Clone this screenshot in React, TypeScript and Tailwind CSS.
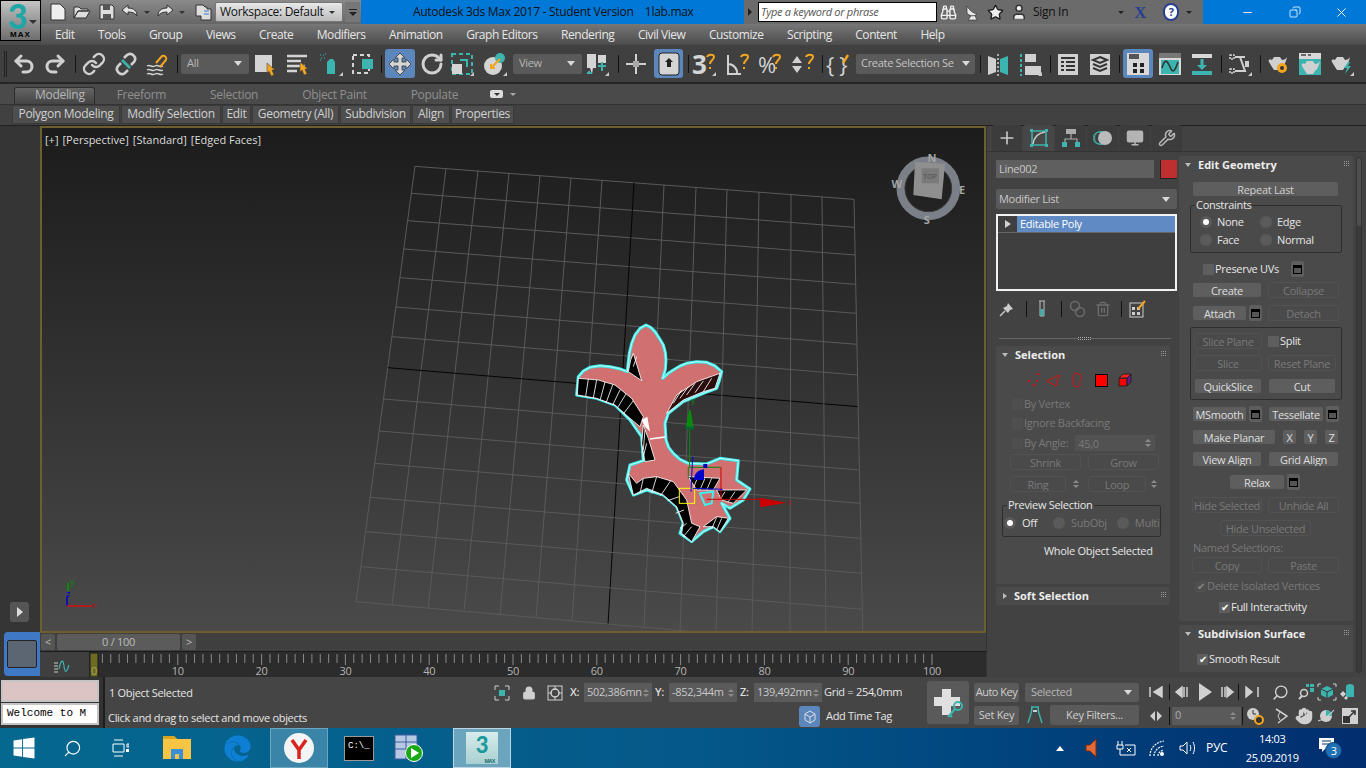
import React from "react";
import {
  Undo2, Redo2, Link, RotateCw, Binoculars, Star, User, Search, Lock, Hand, Wrench, Plus, Monitor, Trash2,
  Minus, X, Copy,
} from "lucide-react";
import { FaWindows, FaEdge } from "react-icons/fa";

const TEAL = "#3cb5b0";
const ORANGE = "#f2a51f";
const LIGHT = "#d0d0d0";

function I({ w = 24, h = 24, className = "", children }: { w?: number; h?: number; className?: string; children?: React.ReactNode }) {
  return (
    <svg width={w} height={h} viewBox={`0 0 ${w} ${h}`} fill="none" className={"shrink-0 " + className}>
      {children}
    </svg>
  );
}

const Flyout = () => <path d="M24 24h-4l4-4z" fill="#c8c8c8" />;
const Cursor = ({ x, y }: { x: number; y: number }) => (
  <path transform={`translate(${x} ${y})`} d="M0 0l8 7h-3l2 5-3 1-2-5-2 2z" fill={ORANGE} stroke="#3a3a3a" strokeWidth=".5" />
);

function Sep({ className = "" }: { className?: string }) {
  return <div className={"w-px h-[18px] bg-[#141414] shrink-0 " + className} />;
}

function Drop({ label, className = "" }: { label: string; className?: string }) {
  return (
    <div className={"h-[20px] bg-[#5a5a5a] rounded-[2px] shrink-0 flex items-center justify-between pl-[6px] pr-[7px] text-[11px] text-[#b8b8b8] overflow-hidden " + className}>
      <span className="whitespace-nowrap">{label}</span>
      <span className="w-0 h-0 border-x-[4px] border-x-transparent border-t-[5px] border-t-[#d8d8d8] shrink-0" />
    </div>
  );
}

function BigMenu() {
  const items = ["Edit", "Tools", "Group", "Views", "Create", "Modifiers", "Animation", "Graph Editors", "Rendering", "Civil View", "Customize", "Scripting", "Content", "Help"];
  return (
    <div className="h-[21px] bg-linear-to-b from-[#777777] to-[#4c4c4c] flex items-center gap-[23.5px] pl-[14px] text-[12px] tracking-[-0.45px] text-[#e6e6e6]">
      {items.map((m) => (
        <span key={m} className="whitespace-nowrap">{m}</span>
      ))}
    </div>
  );
}

function TitleRow() {
  return (
    <div className="h-[24px] flex bg-[#0078d7]">
      <div className="w-[320px] bg-linear-to-b from-[#8a8a8a] to-[#666666] flex items-center pl-[8px] shrink-0">
        <I w={18} h={18}><path d="M2 1h9l5 5v11H2z" fill="#eee" stroke="#333" /></I>
        <I w={18} h={18} className="ml-[6px]"><path d="M1 15V4h5l2 2h7v2H5l-4 7zM1 15l4-7h12l-4 7z" fill="#ddd" stroke="#333" /></I>
        <I w={18} h={18} className="ml-[7px]"><path d="M2 2h12l2 2v12H2z" fill="#ddd" stroke="#333" /><path d="M5 2h7v5H5zM5 11h8v5H5z" fill="#555" /></I>
        <I w={20} h={18} className="ml-[4px]"><path d="M2 7l6-5v3c6 0 9 3 9 8-2-3-5-4-9-4v3z" fill="#e4e4e4" stroke="#333" /></I>
        <span className="ml-[4px] mr-[5px] w-0 h-0 border-x-[3px] border-x-transparent border-t-[3px] border-t-[#333]" />
        <I w={20} h={18}><path d="M18 7l-6-5v3c-6 0-9 3-9 8 2-3 5-4 9-4v3z" fill="#e4e4e4" stroke="#333" /></I>
        <span className="ml-[4px] mr-[10px] w-0 h-0 border-x-[3px] border-x-transparent border-t-[3px] border-t-[#333]" />
        <I w={18} h={18}><path d="M1 2h7l2 2h2v2h4v11H6V13H1z" fill="#ddd" stroke="#333" /><path d="M9 8h5M9 11h5" stroke="#3b7ecb" /></I>
        <div className="ml-[2px] w-[128px] h-[20px] bg-linear-to-b from-[#e8e8e8] to-[#bcbcbc] flex items-center justify-between pl-[4px] pr-[7px] text-[12px] text-[#111] border border-[#777] rounded-[2px]">
          <span className="whitespace-nowrap">Workspace: Default</span>
          <span className="w-0 h-0 border-x-[3px] border-x-transparent border-t-[3px] border-t-[#333]" />
        </div>
        <div className="ml-[2px] w-[15px] h-[20px] bg-[#777] flex flex-col items-center justify-center gap-[2px]">
          <span className="w-[8px] h-px bg-[#222]" />
          <span className="w-0 h-0 border-x-[4px] border-x-transparent border-t-[4px] border-t-[#222]" />
        </div>
      </div>
      <div className="w-[383px] text-[12px] text-[#111] leading-[24px] pl-[52px] whitespace-pre shrink-0">{"Autodesk 3ds Max 2017 - Student Version    1lab.max"}</div>
      <div className="w-[459px] h-[24px] bg-[#6b6b6b] flex items-center shrink-0 pl-[4px]">
        <span className="w-0 h-0 border-y-[4px] border-y-transparent border-l-[4px] border-l-[#222]" />
        <div className="ml-[6px] w-[179px] h-[20px] bg-white border border-black text-[11px] italic text-[#555] pl-[2px] leading-[18px]">Type a keyword or phrase</div>
        <Binoculars size={17} color="#eee" className="ml-[3px]" />
        <I w={16} h={18} className="ml-[7px]"><path d="M3 3c3 5 6 7 10 8-3 3-8 2-10-1zM7 13l-3 4h9l-2-4" fill="#e8e8e8" stroke="#222" strokeWidth=".6" /></I>
        <Star size={17} fill="#eee" color="#222" className="ml-[7px]" />
        <User size={18} fill="#eee" color="#333" className="ml-[6px]" />
        <span className="ml-[5px] text-[12px] text-[#111]">Sign In</span>
        <span className="ml-[50px] w-0 h-0 border-x-[3px] border-x-transparent border-t-[3px] border-t-[#222]" />
        <span className="ml-[10px] text-[17px] leading-none font-bold text-[#26408f] font-['Liberation_Serif',serif]">X</span>
        <div className="ml-[17px] w-[16px] h-[18px] rounded-full bg-white border-2 border-[#26408f] text-[#26408f] text-[11px] font-bold leading-[14px] text-center">?</div>
        <span className="ml-[7px] w-0 h-0 border-x-[3px] border-x-transparent border-t-[3px] border-t-[#222]" />
      </div>
      <div className="flex-1 flex items-center text-white">
        <Minus size={13} className="ml-[38px]" strokeWidth={1.6} />
        <Copy size={12} className="ml-[35px] -scale-x-100" strokeWidth={1.6} />
        <X size={15} className="ml-[33px]" strokeWidth={1.5} />
      </div>
    </div>
  );
}

function Logo() {
  return (
    <div className="w-[41px] h-[41px] bg-linear-to-b from-[#c4c4c4] to-[#6f6f6f] border border-black flex flex-col items-center relative">
      <span className="text-[34px] leading-[30px] font-black text-[#1ea7a6] font-['Lato',sans-serif] -ml-[6px]">3</span>
      <span className="text-[8px] leading-[8px] font-bold text-black tracking-[1px] font-['Liberation_Sans',sans-serif]">MAX</span>
      <span className="absolute right-[3px] top-[19px] w-0 h-0 border-x-[4px] border-x-transparent border-t-[4px] border-t-[#333]" />
    </div>
  );
}

function MoveIcon() {
  return (
    <I>
      <path d="M12 1l5 5h-3v4h4V7l5 5-5 5v-3h-4v4h3l-5 5-5-5h3v-4H6v3l-5-5 5-5v3h4V6H7z" fill="#d4d4d4" stroke="#333" strokeWidth=".8" />
    </I>
  );
}

function MainToolbar() {
  return (
    <div className="h-[39px] bg-[#404040] border-b-2 border-[#262626] flex items-center relative">
      <div className="ml-[4px] w-[3px] h-[26px] border-x border-[#202020]" />
      <Undo2 size={24} color={LIGHT} strokeWidth={3} className="ml-[5px] shrink-0" />
      <Redo2 size={24} color={LIGHT} strokeWidth={3} className="ml-[7px] shrink-0" />
      <Sep className="ml-[8px]" />
      <Link size={24} color={LIGHT} strokeWidth={2.4} className="ml-[6px] shrink-0" />
      <I className="ml-[8px]">
        <path d="M10 6l3-3a5 5 0 0 1 7 7l-3 3M14 18l-3 3a5 5 0 0 1-7-7l3-3" stroke={LIGHT} strokeWidth="2.6" />
        <path d="M8 8l8 8" stroke={TEAL} strokeWidth="2.6" />
      </I>
      <I className="ml-[7px]">
        <path d="M2 14c3-2 5 2 8 0s5 2 8 0M2 18c3-2 5 2 8 0s5 2 8 0M2 22c3-2 5 2 8 0s5 2 8 0" stroke={LIGHT} strokeWidth="1.5" />
        <path d="M11 11l6-7a3 3 0 0 1 4 4l-6 7" stroke={ORANGE} strokeWidth="2" />
      </I>
      <Sep className="ml-[8px]" />
      <Drop label="All" className="ml-[3px] w-[68px]" />
      <I className="ml-[3px]"><rect x="3" y="3" width="17" height="17" fill="#d4d4d4" /><Cursor x={15} y={11} /></I>
      <I className="ml-[9px]"><path d="M2 4h20M2 9h14M2 14h18M2 19h10" stroke="#d4d4d4" strokeWidth="2.4" /><Cursor x={15} y={10} /></I>
      <I className="ml-[10px]">
        <path d="M8 10l3-3h3l2 3v12H8z" fill={TEAL} />
        <path d="M1 3h1M4 3h1M2 6h1M5 6h1M1 8h1M6 2h1" stroke={TEAL} />
        <Flyout />
      </I>
      <I className="ml-[7px]">
        <rect x="3" y="3" width="16" height="18" stroke="#d4d4d4" strokeWidth="2" strokeDasharray="4 3" />
        <rect x="12" y="7" width="11" height="10" fill={TEAL} />
      </I>
      <Sep className="ml-[7px]" />
      <div className="ml-[3px] w-[30px] h-[29px] bg-[#5b87bd] rounded-[3px] flex items-center justify-center shrink-0"><MoveIcon /></div>
      <RotateCw size={24} color={LIGHT} strokeWidth={3} className="ml-[5px] shrink-0" />
      <I className="ml-[6px]">
        <rect x="2" y="2" width="20" height="20" stroke={TEAL} strokeWidth="2" strokeDasharray="4 3" />
        <path d="M10 8h7v7" stroke={TEAL} strokeWidth="2" />
        <rect x="2" y="12" width="10" height="10" fill="#d4d4d4" />
        <Flyout />
      </I>
      <I className="ml-[9px]">
        <circle cx="10" cy="14" r="9" fill="#d4d4d4" />
        <circle cx="17" cy="6" r="5" fill={TEAL} />
        <path d="M8 16l9-9M8 12v4h4" stroke={ORANGE} strokeWidth="2" />
        <Flyout />
      </I>
      <Drop label="View" className="ml-[6px] w-[69px]" />
      <I className="ml-[3px]">
        <path d="M2 2h9v14H8l-1 6-2-6H2z" fill="#d4d4d4" />
        <path d="M13 3h8v8h-8z" fill="#d4d4d4" />
        <path d="M17 10v9M13 14h8M4 19v3M2 21h5" stroke={TEAL} strokeWidth="2" />
        <Flyout />
      </I>
      <Sep className="ml-[9px]" />
      <I className="ml-[5px]"><path d="M12 2v20M2 12h20" stroke={LIGHT} strokeWidth="2" /><rect x="9" y="9" width="6" height="6" fill="#a8a8a8" /></I>
      <div className="ml-[6px] w-[29px] h-[29px] bg-[#5b87bd] rounded-[3px] flex items-center justify-center shrink-0">
        <I><rect x="2" y="1" width="20" height="22" rx="3" fill="#d4d4d4" stroke="#222" /><path d="M12 6l4 4h-2v5h-4v-5H8z" fill="#222" /></I>
      </div>
      <Sep className="ml-[5px]" />
      <Snap className="ml-[3px]" q={<span className="text-[26px] font-bold text-[#d4d4d4] leading-[24px]">3</span>} flyout />
      <Snap className="ml-[10px]" q={<I w={15} h={24}><path d="M2 3v19h13M2 12a9 9 0 0 1 9 10" stroke={LIGHT} strokeWidth="2" /></I>} />
      <Snap className="ml-[8px]" q={<span className="text-[22px] text-[#d4d4d4] leading-[24px]">%</span>} />
      <Snap className="ml-[9px]" q={<I w={13} h={24}><path d="M1 11l5-7 5 7zM1 14l5 7 5-7z" fill={LIGHT} /></I>} />
      <Sep className="ml-[7px]" />
      <div className="ml-[3px] w-[24px] h-[24px] relative shrink-0 flex items-center">
        <span className="text-[22px] text-[#d4d4d4] leading-[24px] whitespace-pre">{"{ }"}</span>
        <I className="absolute left-0 top-0"><path d="M17 11l5-8" stroke={ORANGE} strokeWidth="2.5" /></I>
      </div>
      <Drop label="Create Selection Se" className="ml-[6px] w-[119px] !text-[#c4c4c4] !pl-[5px] !pr-[5px]" />
      <Sep className="ml-[5px]" />
      <I className="ml-[5px]">
        <path d="M2 4l8 3v13l-8 3z" fill={LIGHT} />
        <path d="M22 4l-8 3v13l8 3z" fill={TEAL} />
        <path d="M12 2v22" stroke={LIGHT} strokeWidth="1.5" strokeDasharray="2 2" />
      </I>
      <I className="ml-[8px]">
        <path d="M3 2v22" stroke={TEAL} strokeWidth="2" strokeDasharray="3 2" />
        <rect x="7" y="2" width="11" height="8" fill={LIGHT} />
        <rect x="7" y="14" width="16" height="9" fill={LIGHT} />
        <Flyout />
      </I>
      <Sep className="ml-[8px]" />
      <I className="ml-[5px]">
        <rect x="2" y="2" width="20" height="21" fill={LIGHT} />
        <path d="M5 6h14M5 10h3M10 10h9M5 14h3M10 14h9M5 18h3M10 18h9" stroke="#333" strokeWidth="2" />
      </I>
      <I className="ml-[8px]">
        <rect x="2" y="2" width="20" height="21" fill={LIGHT} />
        <path d="M12 5l7 3-7 3-7-3zM5 12l7 3 7-3M5 16l7 3 7-3" stroke="#333" strokeWidth="2" />
      </I>
      <Sep className="ml-[7px]" />
      <div className="ml-[3px] w-[30px] h-[29px] bg-[#5b87bd] rounded-[3px] flex items-center justify-center shrink-0">
        <I><rect x="1" y="1" width="22" height="22" fill="#d8d8d8" /><path d="M3 2h10v5H3z" fill="#555" /><path d="M7 11h4v4H7zM14 11h4v4h-4zM7 17h4v4H7zM14 17h4v4h-4z" fill="#222" /></I>
      </div>
      <I className="ml-[5px]">
        <rect x="1" y="1" width="22" height="22" fill="#d8d8d8" />
        <path d="M1 1h22v5H1z" fill="#777" />
        <rect x="3" y="8" width="18" height="14" fill={TEAL} />
        <path d="M4 16c3-10 5-8 8-1s5 4 8-5" stroke="#333" strokeWidth="1.6" />
      </I>
      <I className="ml-[8px]">
        <rect x="2" y="2" width="20" height="4" fill="#d8d8d8" />
        <path d="M12 7v9" stroke={TEAL} strokeWidth="3" />
        <path d="M7 13h10l-5 5z" fill={TEAL} />
        <rect x="2" y="19" width="20" height="4" fill={TEAL} />
      </I>
      <Sep className="ml-[7px]" />
      <I className="ml-[6px]">
        <path d="M2 3h4v4H2zM2 17h4v4H2z" stroke={LIGHT} strokeWidth="1.5" strokeDasharray="2 1" />
        <path d="M7 5h5l5 14H7M12 5h5" stroke={LIGHT} strokeWidth="2" />
        <rect x="17" y="9" width="4" height="6" fill={LIGHT} />
        <Flyout />
      </I>
      <Sep className="ml-[8px]" />
      <I className="ml-[6px]"><Teapot /><circle cx="15" cy="16" r="5" fill={ORANGE} /><circle cx="15" cy="16" r="2" fill="#333" /></I>
      <I className="ml-[7px]">
        <rect x="1" y="1" width="22" height="22" fill={TEAL} />
        <rect x="1" y="1" width="22" height="6" fill="#d8d8d8" />
        <path d="M3 3h5M10 3h3" stroke="#444" strokeWidth="1.5" />
        <g transform="translate(2 4)"><Teapot /></g>
      </I>
      <I className="ml-[8px]"><Teapot /><path d="M18 10l-4 6h3l-2 6 6-8h-3l2-4z" fill={TEAL} /><Flyout /></I>
    </div>
  );
}

function Teapot() {
  return <path d="M7 5h6l2 3c2 0 4-1 5-3-1 4-2 8-5 10l-2 3H7l-2-3-3-5c-1-2 0-3 3-2z" fill={LIGHT} />;
}

function Snap({ q, className = "", flyout }: { q: React.ReactNode; className?: string; flyout?: boolean }) {
  return (
    <div className={"w-[24px] h-[24px] relative shrink-0 flex items-center " + className}>
      {q}
      <I className="absolute left-0 top-0">
        <path d="M15 5c1-3 7-3 7 0 0 3-4 3-4 7M18 15v2" stroke={ORANGE} strokeWidth="2" />
        {flyout && <Flyout />}
      </I>
    </div>
  );
}

function Ribbon() {
  const tabs = [
    ["Modeling", "ml-[21px] text-[#b6b6b6]"],
    ["Freeform", "ml-[32px] text-[#8f8f8f]"],
    ["Selection", "ml-[44px] text-[#8f8f8f]"],
    ["Object Paint", "ml-[44px] text-[#8f8f8f]"],
    ["Populate", "ml-[44px] text-[#8f8f8f]"],
  ];
  const panels = [
    ["Polygon Modeling", "w-[108px]"],
    ["Modify Selection", "w-[100px]"],
    ["Edit", "w-[29px]"],
    ["Geometry (All)", "w-[87px]"],
    ["Subdivision", "w-[71px]"],
    ["Align", "w-[38px]"],
    ["Properties", "w-[63px]"],
  ];
  return (
    <div className="bg-[#4a4a4a]">
      <div className="h-[21px] flex items-end relative text-[12px] pl-[14px] border-b border-[#333]">
        <div className="absolute left-[14px] bottom-0 w-[81px] h-[17px] bg-linear-to-b from-[#666] to-[#444] border border-b-0 border-[#2e2e2e] rounded-t-[3px]" />
        {tabs.map(([t, c]) => (
          <span key={t} className={"relative h-[19px] leading-[20px] whitespace-nowrap " + c}>{t}</span>
        ))}
        <div className="relative ml-[32px] mb-[6px] w-[13px] h-[8px] rounded-[2px] bg-[#ddd] flex items-center justify-center">
          <span className="w-0 h-0 border-x-[3px] border-x-transparent border-t-[3px] border-t-[#333]" />
        </div>
        <span className="relative ml-[7px] mb-[8px] w-0 h-0 border-x-[3px] border-x-transparent border-t-[3px] border-t-[#aaa]" />
      </div>
      <div className="h-[21px] flex items-start gap-px pl-[12px] bg-[#414141] border-b border-[#202020]">
        {panels.map(([t, c]) => (
          <div key={t} className={"h-[19px] bg-[#4e4e4e] border border-[#3a3a3a] text-[12px] text-[#d0d0d0] text-center leading-[15px] whitespace-nowrap shrink-0 " + c}>{t}</div>
        ))}
      </div>
    </div>
  );
}

const LEFT_Y = [34, 115, 197, 282, 368, 456, 545, 638, 732, 828, 925, 1027, 1130, 1235, 1340];
const RIGHT_Y = [133, 217, 300, 388, 475, 568, 660, 755, 850, 945, 1045, 1150, 1255, 1363, 1475];
const TOP_X = [415, 446, 478, 509, 540, 571, 602, 634, 664, 696, 727, 759, 791, 822, 854];
const BOT_X = [356, 392, 428, 464, 500, 536, 572, 608, 644, 680, 716, 752, 790, 826, 863];

function Grid() {
  const ly = LEFT_Y.map((y) => y / 3 + 155);
  const ry = RIGHT_Y.map((y) => y / 3 + 155);
  const lines: React.ReactNode[] = [];
  for (let i = 0; i < 15; i++) {
    const t = (ly[i] - ly[0]) / (ly[14] - ly[0]);
    const x1 = 415 + (356 - 415) * t;
    const x2 = 854 + (863 - 854) * t;
    lines.push(
      <line key={"h" + i} x1={x1} y1={ly[i]} x2={x2} y2={ry[i]} stroke={i === 7 ? "#050505" : "#5a5a5a"} strokeWidth={1} />
    );
    lines.push(
      <line key={"v" + i} x1={TOP_X[i]} y1={166 + (199 - 166) * (i / 14)} x2={BOT_X[i]} y2={602 + (647 - 602) * (i / 14)} stroke={i === 7 ? "#050505" : "#5a5a5a"} strokeWidth={1} />
    );
  }
  return <g>{lines}</g>;
}

const OUTLINE =
  "318,45 332,52 345,65 358,85 370,105 376,128 378,150 376,178 368,205 385,190 400,180 420,168 440,160 470,155 500,157 525,168 545,185 538,212 530,235 490,250 430,275 385,310 375,340 378,390 386,412 400,430 420,448 445,460 500,462 540,445 595,452 590,510 630,537 610,570 570,595 545,580 570,625 540,665 520,650 490,665 455,695 420,670 430,640 410,590 370,555 320,540 280,555 260,510 270,465 310,452 305,380 270,330 225,285 170,265 110,255 115,200 130,183 150,172 180,167 210,170 238,176 262,185 265,155 268,130 275,100 285,75 300,55";

function Shape() {
  return (
    <g transform="translate(540 310) scale(0.3333)">
      <polygon points={OUTLINE} fill="#d07070" stroke="#3df0f0" strokeWidth="9" strokeLinejoin="round" />
      <polygon points={OUTLINE} fill="none" stroke="#ffffff" strokeWidth="2" />
      <g fill="#000" stroke="#fff" strokeWidth="2.5">
        <polygon points="115,205 175,210 225,225 275,265 310,320 300,350 270,325 225,285 170,265 112,255" />
        <polygon points="280,130 305,212 265,185 272,150" />
        <polygon points="310,345 325,385 345,450 315,455 305,400" />
        <polygon points="265,490 290,520 310,505 350,500 400,515 440,570 455,640 480,650 455,695 425,670 430,640 410,590 370,555 320,535 280,555" />
        <polygon points="445,500 540,505 520,540 470,540" />
        <polygon points="530,540 620,540 580,580 545,570" />
        <polygon points="490,650 530,620 565,625 540,665 520,650" />
      </g>
      <polygon points="380,310 410,255 470,215 540,190 525,235 490,245 430,270" fill="#2a0d0d" stroke="#fff" strokeWidth="2.5" />
      <path d="M145 207l-8 52M170 210l-10 54M195 216l-14 52M218 225l-20 54M240 240l-22 45M258 252l-26 42M280 272l-30 40M400 280l25-40M420 265l25-35M440 255l25-35M465 248l25-35M490 245l25-40M290 140l-10 30M315 360l-5 60M320 400l-10 40M310 505l-10 45M350 500l-15 50M392 512l-30 45M418 560l-35 12M432 600l-25 10M440 640l-20 15M455 650l-25 30M530 622l-15 35M545 625l-15 35M470 510l-10 25M495 505l-15 35M515 505l-15 35M555 545l-15 25M585 545l-20 30" stroke="#fff" strokeWidth="2.5" fill="none" />
      <polygon points="305,330 322,320 330,365 315,350" fill="#fff" />
      <path d="M330 387l45-6" stroke="#fff" strokeWidth="4" />
      <polygon points="480,550 520,545 515,580 495,585" fill="#d07070" stroke="#3df0f0" strokeWidth="6" />
      <rect x="418" y="535" width="46" height="45" fill="none" stroke="#ffff00" strokeWidth="3" />
      <path d="M449 470V350" stroke="#0a8a0a" strokeWidth="3" />
      <polygon points="437,355 461,355 452,300 447,300" fill="#0a8a0a" />
      <rect x="437" y="350" width="25" height="8" fill="#063" />
      <text x="453" y="278" fontSize="24" fill="#0a8a0a" fontFamily="Liberation Sans">y</text>
      <path d="M445 505V472h97" stroke="#0a8a0a" strokeWidth="3" fill="none" />
      <path d="M543 472v98M500 568h170" stroke="#c00" strokeWidth="3" fill="none" />
      <path d="M458 440l-5 105M458 535l90 3" stroke="#0000dd" strokeWidth="3" fill="none" />
      <path d="M462 510c0-18 12-30 30-32v32z" fill="#0000cc" />
      <rect x="490" y="462" width="12" height="12" fill="#0000bb" />
      <polygon points="660,564 660,592 740,578" fill="#c00" />
      <text x="742" y="586" fontSize="24" fill="#a01818" fontFamily="Liberation Sans">X</text>
    </g>
  );
}

function ViewCube() {
  return (
    <g transform="translate(870 140) scale(0.3333)">
      <circle cx="175" cy="145" r="83" stroke="#7b8088" strokeWidth="25" fill="none" />
      <circle cx="175" cy="145" r="70" stroke="#3a3a3a" strokeWidth="3" fill="none" />
      <polygon points="135,65 225,72 215,178 130,165" fill="#8f8f8f" />
      <rect x="155" y="85" width="52" height="45" fill="#7a7a7a" />
      <text x="180" y="116" fontSize="22" fill="#4e4e4e" textAnchor="middle" fontFamily="Open Sans">TOP</text>
      <g fontSize="33" fontWeight="700" fill="#a4a4a4" textAnchor="middle" fontFamily="Open Sans">
        <text x="186" y="66">N</text>
        <text x="276" y="162">E</text>
        <text x="170" y="252">S</text>
        <text x="80" y="145">W</text>
      </g>
    </g>
  );
}

function Viewport() {
  return (
    <div className="h-[507px] border-2 border-[#6e5f2d] relative bg-linear-to-b from-[#1c1c1c] to-[#4a4a4a] overflow-hidden">
      <svg width={942} height={503} viewBox="42 128 942 503" className="block">
        <Grid />
        <Shape />
        <ViewCube />
        <path d="M67 597v9" stroke="#0000d0" strokeWidth="1.5" />
        <path d="M67 606h25" stroke="#d01010" strokeWidth="1.5" />
        <path d="M68 583v8" stroke="#0a8a0a" strokeWidth="2" />
        <text x="70" y="585" fontSize="9" fill="#0a8a0a" fontFamily="Liberation Sans">y</text>
        <text x="66" y="597" fontSize="9" fill="#0000d0" fontFamily="Liberation Sans">z</text>
        <text x="92" y="608" fontSize="9" fill="#a01818" fontFamily="Liberation Sans">x</text>
      </svg>
      <div className="absolute left-[3px] top-[4px] flex gap-[4px] text-[11px] tracking-normal text-[#dcdcdc] whitespace-nowrap">
        <span>[+]</span>
        <span>[Perspective]</span>
        <span>[Standard]</span>
        <span>[Edged Faces]</span>
      </div>
    </div>
  );
}

function TimeSlider() {
  return (
    <div className="h-[18px] bg-[#3f3f3f] flex items-center pl-px text-[11px] text-[#bdbdbd] gap-[2px]">
      <div className="w-[14px] h-[16px] bg-[#555] rounded-[2px] text-center leading-[15px]">&lt;</div>
      <div className="w-[123px] h-[16px] bg-[#5b5b5b] rounded-[2px] text-center leading-[15px]">0 / 100</div>
      <div className="w-[14px] h-[16px] bg-[#555] rounded-[2px] text-center leading-[15px]">&gt;</div>
    </div>
  );
}

function Track() {
  const ticks = Array.from({ length: 101 }, (_, i) => i);
  return (
    <div className="h-[26px] bg-[#2c2c2c] border-t border-[#1a1a1a] relative">
      <svg width={946} height={25} className="block">
        {ticks.map((i) => (
          <line key={i} x1={54 + i * 8.38} y1={2} x2={54 + i * 8.38} y2={i % 10 === 0 ? 13 : 11} stroke="#8a8a8a" />
        ))}
        {ticks.filter((i) => i % 10 === 0 && i > 0).map((i) => (
          <text key={i} x={54 + i * 8.38} y={23} fontSize="11" fill="#b4b4b4" textAnchor="middle" fontFamily="Open Sans">{i}</text>
        ))}
        <rect x="0" y="0" width="49" height="25" fill="#3f3f3f" />
        <rect x="50" y="1" width="8" height="24" fill="#6d6a22" stroke="#1a1a1a" />
        <text x="54" y="23" fontSize="11" fill="#a8a654" textAnchor="middle" fontFamily="Open Sans">0</text>
        <path d="M14 11h4M14 14h4M14 17h4M14 20h4" stroke="#ccc" />
        <path d="M19 17c2-10 4-10 5-3s2 8 5-1" stroke={TEAL} strokeWidth="1.2" fill="none" />
      </svg>
    </div>
  );
}

function Btn({ className = "", dis, children }: { className?: string; dis?: boolean; children: React.ReactNode }) {
  return (
    <div
      className={
        "h-[16px] rounded-[3px] text-center text-[11px] leading-[15px] whitespace-nowrap shrink-0 overflow-hidden " +
        (dis ? "bg-[#4a4a4a] border border-[#525252] text-[#797979] " : "bg-[#5e5e5e] border border-[#4a4a4a] text-[#dedede] ") +
        className
      }
    >
      {children}
    </div>
  );
}

const Box = ({ className = "" }: { className?: string }) => (
  <div className={"w-[13px] h-[16px] bg-[#5e5e5e] rounded-[2px] flex items-center justify-center shrink-0 " + className}>
    <div className="w-[9px] h-[9px] border border-black border-t-[3px] bg-[#555]" />
  </div>
);

function Check({ label, dis, checked, className = "" }: { label: string; dis?: boolean; checked?: boolean; className?: string }) {
  return (
    <div className={"flex items-center gap-[1px] text-[11px] whitespace-nowrap " + (dis ? "text-[#797979] " : "text-[#e6e6e6] ") + className}>
      <div className={"w-[11px] h-[11px] flex items-center justify-center text-[10px] leading-none " + (dis ? "bg-[#4f4f4f] text-[#888] " : "bg-[#5e5e5e] text-white ")}>{checked ? "✔" : ""}</div>
      <span>{label}</span>
    </div>
  );
}

function Radio({ on, className = "" }: { on?: boolean; className?: string }) {
  return (
    <div className={"flex items-center " + className}>
      <div className="w-[12px] h-[12px] rounded-full bg-[#5a5a5a] flex items-center justify-center shrink-0">
        {on && <div className="w-[6px] h-[6px] rounded-full bg-white" />}
      </div>
    </div>
  );
}

function Legend({ text, className = "" }: { text: string; className?: string }) {
  return <div className={"absolute -top-[7px] left-[4px] px-[1px] bg-[#4a4a4a] text-[11px] leading-[12px] text-[#e6e6e6] whitespace-nowrap " + className}>{text}</div>;
}

const Spin = ({ className = "" }: { className?: string }) => (
  <div className={"flex flex-col items-center gap-[2px] shrink-0 " + className}>
    <span className="w-0 h-0 border-x-[3px] border-x-transparent border-b-[3px] border-b-[#8a8a8a]" />
    <span className="w-0 h-0 border-x-[3px] border-x-transparent border-t-[3px] border-t-[#8a8a8a]" />
  </div>
);

function RollHead({ title, open = true }: { title: string; open?: boolean }) {
  return (
    <div className="h-[18px] flex items-center relative shrink-0">
      {open ? (
        <span className="ml-[6px] w-0 h-0 border-x-[3px] border-x-transparent border-t-[4px] border-t-[#bbb]" />
      ) : (
        <span className="ml-[7px] w-0 h-0 border-y-[3px] border-y-transparent border-l-[4px] border-l-[#bbb]" />
      )}
      <span className="ml-[7px] text-[11px] font-bold tracking-normal text-[#ececec] whitespace-nowrap">{title}</span>
      <div className="absolute right-[4px] top-[5px] grid grid-cols-3 gap-px">
        {Array.from({ length: 9 }, (_, i) => <span key={i} className="w-px h-px bg-[#999]" />)}
      </div>
    </div>
  );
}

function TabsRow() {
  return (
    <div className="h-[26px] flex items-end gap-px pl-[5px] border-b border-[#333]">
      <div className="w-[30px] h-[26px] bg-[#3c3c3c] rounded-t-[3px] flex items-center justify-center"><Plus size={20} color="#c6c6c6" strokeWidth={2} /></div>
      <div className="w-[31px] h-[26px] bg-[#474747] rounded-t-[3px] flex items-center justify-center">
        <I w={18} h={18}><rect x="2" y="2" width="14" height="14" stroke={TEAL} strokeWidth="1.5" /><path d="M3 15C4 8 8 4 15 3" stroke="#ccc" strokeWidth="1.5" /><path d="M0 0h3v3H0zM15 0h3v3h-3zM0 15h3v3H0zM15 15h3v3h-3z" fill={TEAL} /></I>
      </div>
      <div className="w-[31px] h-[26px] bg-[#3c3c3c] rounded-t-[3px] flex items-center justify-center">
        <I w={18} h={18}><rect x="4" y="0" width="10" height="5" fill="#aaa" /><path d="M9 5v5M3 13v-3h12v3" stroke="#aaa" strokeWidth="1.2" /><path d="M0 13h5v5H0zM13 13h5v5h-5z" fill={TEAL} /></I>
      </div>
      <div className="w-[31px] h-[26px] bg-[#3c3c3c] rounded-t-[3px] flex items-center justify-center">
        <I w={20} h={16}><circle cx="6" cy="8" r="6" stroke={TEAL} /><circle cx="8" cy="8" r="6.5" stroke={TEAL} /><circle cx="12" cy="8" r="7" fill="#bbb" /></I>
      </div>
      <div className="w-[31px] h-[26px] bg-[#3c3c3c] rounded-t-[3px] flex items-center justify-center"><Monitor size={18} color="#b4b4b4" fill="#b4b4b4" /></div>
      <div className="w-[31px] h-[26px] bg-[#3c3c3c] rounded-t-[3px] flex items-center justify-center"><Wrench size={18} color="#b4b4b4" /></div>
    </div>
  );
}

function ModifyCol() {
  return (
    <div className="w-[183px] flex flex-col pl-[1px]">
      <div className="flex mt-[8px]">
        <div className="w-[158px] h-[18px] bg-[#5f5f5f] text-[11px] text-[#c8c8c8] pl-[3px] leading-[17px]">Line002</div>
        <div className="ml-[6px] w-[17px] h-[19px] bg-[#bf2f2f] border-l border-b border-[#222]" />
      </div>
      <Drop label="Modifier List" className="mt-[10px] w-[181px] !pl-[3px] !text-[#c8c8c8]" />
      <div className="mt-[5px] w-[181px] h-[77px] bg-[#3f3f3f] border-2 border-[#f2f2f2]">
        <div className="h-[17px] flex items-stretch border-b border-[#666]">
          <div className="w-[19px] flex items-center justify-center bg-[#3f3f3f]">
            <span className="w-0 h-0 border-y-[4px] border-y-transparent border-l-[6px] border-l-[#d0d0d0]" />
          </div>
          <div className="flex-1 bg-[#5f8ac3] text-[11px] text-white pl-[3px] leading-[16px]">Editable Poly</div>
        </div>
      </div>
      <div className="h-[21px] mt-[7px] flex items-center pl-[3px]">
        <I w={16} h={16}><path d="M1 15l5-5" stroke="#ccc" strokeWidth="1.5" /><path d="M4 7l5 5 2-3 3-1-5-6-1 3z" fill="#ccc" /></I>
        <Sep className="ml-[11px] !h-[16px]" />
        <I w={10} h={18} className="ml-[10px]"><path d="M2 1h6M3 1v15h4V1" stroke="#bbb" /><rect x="3.500" y="9" width="3" height="7" fill={TEAL} /></I>
        <Sep className="ml-[14px] !h-[16px]" />
        <I w={18} h={18} className="ml-[7px]"><circle cx="6" cy="6" r="4.500" stroke="#6c6c6c" strokeWidth="1.5" /><circle cx="11" cy="12" r="4.500" stroke="#6c6c6c" strokeWidth="1.5" /></I>
        <Trash2 size={16} color="#6c6c6c" className="ml-[8px]" />
        <Sep className="ml-[10px] !h-[16px]" />
        <I w={18} h={18} className="ml-[7px]"><rect x="1" y="3" width="13" height="14" stroke="#ccc" /><path d="M3 7h3v3H3zM8 7h3v3H8zM3 12h3v3H3zM8 12h3v3H8z" fill="#ccc" /><path d="M9 9l7-8" stroke={ORANGE} strokeWidth="2" /></I>
      </div>
      <div className="mt-[19px] w-[172px] ml-[3px] h-px bg-[#666] relative">
        <div className="absolute left-[79px] -top-[1px] w-[13px] h-[3px] bg-[#444] border-y border-dotted border-[#aaa]" />
      </div>
      <div className="mt-[7px] w-[174px] h-[238px] bg-[#4a4a4a] rounded-[2px] flex flex-col">
        <RollHead title="Selection" />
        <div className="h-[16px] mt-[8px] flex items-center pl-[29px]">
          <I w={16} h={16}><path d="M12 2h2M3 9h2M8 13h2M11 9h2" stroke="#e01010" strokeWidth="2" /></I>
          <I w={16} h={16} className="ml-[4px]"><path d="M2 9l12-6-3 11z" stroke="#e01010" /></I>
          <I w={12} h={16} className="ml-[10px]"><path d="M5 1c5 0 6 6 4 8-1 2 1 5-2 6-4 0-6-3-5-7 0-3 0-6 3-7z" stroke="#e01010" /></I>
          <div className="ml-[12px] w-[13px] h-[13px] bg-[#ff0000] border border-black" />
          <I w={14} h={14} className="ml-[10px]"><path d="M1 5h8v8H1z" fill="#ff0000" stroke="#222" /><path d="M1 5l4-4h8L9 5z" fill="#ff2020" stroke="#222" /><path d="M9 5l4-4v8l-4 4z" fill="#6a1a8a" stroke="#222" /></I>
        </div>
        <Check dis label="By Vertex" className="ml-[16px] mt-[8px] h-[16px]" />
        <Check dis label="Ignore Backfacing" className="ml-[16px] mt-[3px] h-[16px]" />
        <div className="flex items-center ml-[16px] mt-[4px] h-[16px]">
          <Check dis label="By Angle:" />
          <div className="ml-[7px] w-[80px] h-[16px] bg-[#525252] text-[11px] text-[#797979] pl-[3px] leading-[15px] flex justify-between items-center pr-[4px]">
            <span>45,0</span>
            <Spin />
          </div>
        </div>
        <div className="flex ml-[14px] mt-[3px] gap-[7px]">
          <Btn dis className="w-[71px]">Shrink</Btn>
          <Btn dis className="w-[71px]">Grow</Btn>
        </div>
        <div className="flex items-center ml-[14px] mt-[6px]">
          <Btn dis className="w-[56px]">Ring</Btn>
          <Spin className="ml-[5px] w-[10px]" />
          <Btn dis className="w-[58px] ml-[7px]">Loop</Btn>
          <Spin className="ml-[3px] w-[10px]" />
        </div>
        <div className="relative ml-[6px] mt-[13px] w-[159px] h-[32px] pt-[4px] border border-[#2e2e2e] rounded-[2px] flex items-center text-[11px]">
          <Legend text="Preview Selection" />
          <Radio on className="ml-[1px]" />
          <span className="ml-[6px] text-[#e6e6e6]">Off</span>
          <Radio className="ml-[16px]" />
          <span className="ml-[6px] text-[#797979]">SubObj</span>
          <Radio className="ml-[10px]" />
          <span className="ml-[6px] text-[#797979]">Multi</span>
        </div>
        <div className="ml-[48px] mt-[6px] text-[11px] text-[#e6e6e6] whitespace-nowrap">Whole Object Selected</div>
      </div>
      <div className="mt-[3px] w-[174px] bg-[#4a4a4a] rounded-[2px]">
        <RollHead title="Soft Selection" open={false} />
      </div>
    </div>
  );
}

function GeoCol() {
  return (
    <div className="w-[174px] flex flex-col mt-[4px] ml-[1px]">
      <div className="bg-[#4a4a4a] h-[465px] rounded-[2px] flex flex-col pl-[13px] relative">
        <div className="-ml-[13px]"><RollHead title="Edit Geometry" /></div>
        <Btn className="w-[147px] mt-[7px]"><span className="text-[#cfcfcf]">Repeat Last</span></Btn>
        <div className="relative mt-[8px] -ml-[2px] w-[152px] h-[48px] border border-[#2e2e2e] rounded-[2px] text-[11px] text-[#e6e6e6]">
          <Legend text="Constraints" />
          <div className="flex items-center h-[18px] mt-[7px] pl-[9px]">
            <Radio on />
            <span className="ml-[5px] w-[43px]">None</span>
            <Radio />
            <span className="ml-[5px]">Edge</span>
          </div>
          <div className="flex items-center h-[18px] pl-[9px]">
            <Radio />
            <span className="ml-[5px] w-[43px]">Face</span>
            <Radio />
            <span className="ml-[5px]">Normal</span>
          </div>
        </div>
        <div className="flex items-center mt-[8px] h-[16px] ml-[11px]">
          <Check label="Preserve UVs" />
          <Box className="ml-[12px]" />
        </div>
        <div className="flex mt-[5px] gap-[6px]">
          <Btn className="w-[70px]">Create</Btn>
          <Btn dis className="w-[71px]">Collapse</Btn>
        </div>
        <div className="flex mt-[7px]">
          <Btn className="w-[55px]">Attach</Btn>
          <Box className="ml-[2px]" />
          <Btn dis className="w-[71px] ml-[6px]">Detach</Btn>
        </div>
        <div className="mt-[6px] -ml-[2px] w-[152px] h-[73px] border border-[#2e2e2e] rounded-[2px] flex flex-col pl-[3px] pt-[5px]">
          <div className="flex items-center">
            <Btn dis className="w-[68px]">Slice Plane</Btn>
            <Check label="Split" className="ml-[6px]" />
          </div>
          <div className="flex mt-[5px] gap-[6px]">
            <Btn dis className="w-[68px]">Slice</Btn>
            <Btn dis className="w-[68px]">Reset Plane</Btn>
          </div>
          <div className="flex mt-[7px] gap-[6px]">
            <Btn className="w-[68px]">QuickSlice</Btn>
            <Btn className="w-[68px]">Cut</Btn>
          </div>
        </div>
        <div className="flex mt-[6px]">
          <Btn className="w-[55px]">MSmooth</Btn>
          <Box className="ml-[2px]" />
          <Btn className="w-[56px] ml-[6px]">Tessellate</Btn>
          <Box className="ml-[2px]" />
        </div>
        <div className="flex mt-[7px]">
          <Btn className="w-[84px]">Make Planar</Btn>
          <Btn className="w-[15px] ml-[6px]">X</Btn>
          <Btn className="w-[15px] ml-[6px]">Y</Btn>
          <Btn className="w-[15px] ml-[6px]">Z</Btn>
        </div>
        <div className="flex mt-[6px] gap-[6px]">
          <Btn className="w-[70px]">View Align</Btn>
          <Btn className="w-[71px]">Grid Align</Btn>
        </div>
        <div className="flex mt-[7px] ml-[37px]">
          <Btn className="w-[56px]">Relax</Btn>
          <Box className="ml-[2px]" />
        </div>
        <div className="flex mt-[7px] gap-[6px]">
          <Btn dis className="w-[70px]">Hide Selected</Btn>
          <Btn dis className="w-[71px]">Unhide All</Btn>
        </div>
        <Btn dis className="w-[91px] ml-[28px] mt-[7px]">Hide Unselected</Btn>
        <div className="text-[11px] text-[#797979] ml-[1px] mt-[4px] leading-[15px]">Named Selections:</div>
        <div className="flex mt-[2px] gap-[6px]">
          <Btn dis className="w-[70px]">Copy</Btn>
          <Btn dis className="w-[71px]">Paste</Btn>
        </div>
        <Check dis checked label="Delete Isolated Vertices" className="ml-[3px] mt-[6px] h-[14px]" />
        <Check checked label="Full Interactivity" className="ml-[27px] mt-[7px] h-[14px]" />
      </div>
      <div className="mt-[4px] bg-[#4a4a4a] h-[47px] rounded-t-[2px]">
        <RollHead title="Subdivision Surface" />
        <Check checked label="Smooth Result" className="ml-[18px] mt-[8px]" />
      </div>
    </div>
  );
}

function CommandPanel() {
  return (
    <div className="w-[380px] bg-[#424242] border-l border-[#333] flex flex-col">
      <TabsRow />
      <div className="flex flex-1 pl-[8px]">
        <ModifyCol />
        <GeoCol />
        <div className="ml-[3px] mt-[5px] w-[6px] h-[516px] bg-[#3a3a3a] rounded-[3px] border border-[#333]">
          <div className="w-full h-[68px] bg-[#4e4e4e] rounded-[3px]" />
        </div>
      </div>
    </div>
  );
}

function Coord({ label, value, className = "" }: { label: string; value: string; className?: string }) {
  return (
    <div className={"flex items-center shrink-0 " + className}>
      <span className="text-[11px] font-semibold text-[#dcdcdc] w-[14px]">{label}</span>
      <div className="w-[68px] h-[19px] bg-[#5a5a5a] flex items-center pl-[3px] pr-[3px] justify-between text-[11px] text-[#c8c8c8] overflow-hidden">
        <span className="w-[56px] overflow-hidden whitespace-nowrap">{value}</span>
        <Spin />
      </div>
    </div>
  );
}

function PlayBack() {
  return (
    <div className="flex flex-col ml-[4px]">
      <div className="h-[24px] mt-[3px] flex items-center">
        <I w={16} h={16}><path d="M2 3v10M14 3L6 8l8 5zM6 3v0" stroke={LIGHT} strokeWidth="1.5" fill={LIGHT} /></I>
        <Sep className="ml-[5px] !h-[16px]" />
        <I w={16} h={16} className="ml-[4px]"><path d="M8 3L2 8l6 5zM10 3v10M13 3v10" stroke={LIGHT} strokeWidth="1.5" fill={LIGHT} /></I>
        <I w={16} h={20} className="ml-[7px]"><path d="M2 1l13 9-13 9z" fill={LIGHT} /></I>
        <I w={16} h={16} className="ml-[6px]"><path d="M3 3v10M6 3v10M8 3l6 5-6 5z" stroke={LIGHT} strokeWidth="1.5" fill={LIGHT} /></I>
        <Sep className="ml-[3px] !h-[16px]" />
        <I w={16} h={16} className="ml-[5px]"><path d="M2 3l6 5-6 5zM14 3v10" stroke={LIGHT} strokeWidth="1.5" fill={LIGHT} /></I>
        <Search size={17} color={LIGHT} className="ml-[12px] -scale-x-100" strokeWidth={2} />
        <I w={18} h={18} className="ml-[8px]"><path d="M9 1h3v3H9zM13 1h4v3h-4zM13 5h4v4h-4z" fill={TEAL} /><circle cx="7" cy="10" r="3.500" stroke={LIGHT} strokeWidth="1.500" /><path d="M2 16l3-3" stroke={LIGHT} strokeWidth="2" /></I>
        <I w={20} h={18} className="ml-[2px]"><path d="M1 4V1h3M16 1h3v3M1 14v3h3M16 17h3v-3" stroke={LIGHT} /><path d="M10 3l6 3v6l-6 3-6-3V6z" fill={TEAL} /><path d="M4 6l6 3 6-3M10 9v6" stroke="#333" /></I>
        <I w={20} h={18} className="ml-[1px]"><ellipse cx="12" cy="4" rx="4" ry="3" fill={TEAL} /><path d="M8 4v10h8V4" fill={TEAL} /><path d="M2 11l3-3 3 3-3 3zM6 15l2-2 2 2-2 2z" fill={LIGHT} /></I>
      </div>
      <div className="h-[21px] mt-[1px] flex items-center">
        <I w={16} h={16}><path d="M7 3L2 8l5 5zM9 3l5 5-5 5z" fill={LIGHT} /></I>
        <Sep className="ml-[5px] !h-[18px]" />
        <div className="ml-[2px] w-[69px] h-[18px] bg-[#5a5a5a] flex items-center justify-between pl-[3px] pr-[5px] text-[11px] text-[#aaa]">
          <span>0</span>
          <Spin />
        </div>
        <Sep className="ml-[1px] !h-[18px]" />
        <I w={18} h={18} className="ml-[3px]"><circle cx="7" cy="7" r="6" fill={LIGHT} /><path d="M7 3v4h3" stroke="#333" /><circle cx="13" cy="13" r="4" fill="#333" stroke={ORANGE} strokeWidth="2" /></I>
        <I w={16} h={18} className="ml-[10px]"><path d="M2 2l11 7-9 7" stroke={LIGHT} strokeWidth="1.5" /><path d="M6 5l-2 4 2 4" stroke={LIGHT} /></I>
        <Hand size={18} color={LIGHT} fill={LIGHT} className="ml-[5px]" />
        <I w={18} h={18} className="ml-[4px]"><circle cx="9" cy="9" r="6" fill={LIGHT} /><path d="M9 3a6 6 0 0 1 6 6H9z" fill={TEAL} /><path d="M1 14C6 13 13 8 17 3" stroke={LIGHT} strokeWidth="1.2" /></I>
        <I w={18} h={18} className="ml-[6px]"><rect x="1" y="1" width="16" height="16" fill={LIGHT} /><rect x="2" y="9" width="7" height="7" fill="#333" /><path d="M7 11l7-7M10 4h4v4" stroke="#333" strokeWidth="1.5" /></I>
      </div>
    </div>
  );
}

function StatusBar() {
  return (
    <div className="h-[51px] bg-[#454545] flex">
      <div className="w-[105px] shrink-0 border-r-2 border-[#1e1e1e] pl-[1px] pt-[3px] bg-[#333]">
        <div className="w-[98px] h-[22px] bg-[#dcc4c4] border-2 border-[#c4c4c4]" />
        <div className="w-[98px] h-[22px] mt-[1px] bg-white border-2 border-[#c4c4c4] pl-[4px] text-[11px] tracking-normal leading-[17px] text-black font-['Liberation_Mono',monospace] overflow-hidden whitespace-nowrap">Welcome to M</div>
      </div>
      <div className="w-[385px] shrink-0 pl-[4px] text-[11px] text-[#e6e6e6] flex flex-col">
        <div className="h-[25px] mt-[1px] leading-[30px]">1 Object Selected</div>
        <div className="mt-[7px] -ml-[1px] leading-[16px]">Click and drag to select and move objects</div>
      </div>
      <div className="w-[437px] shrink-0 flex flex-col">
        <div className="flex items-center h-[19px] mt-[6px]">
          <I w={16} h={16} className="ml-[4px]"><path d="M1 5V1h4M11 1h4v4M1 11v4h4M15 11v4h-4" stroke={LIGHT} /><rect x="5" y="5" width="6" height="6" fill={TEAL} /></I>
          <Lock size={14} color={LIGHT} fill={LIGHT} className="ml-[12px]" />
          <I w={16} h={16} className="ml-[11px]"><rect x="1" y="1" width="14" height="14" stroke={LIGHT} /><circle cx="8" cy="8" r="4" stroke={LIGHT} strokeWidth="1.500" /><path d="M8 1v4M8 11v4M1 8h4M11 8h4" stroke={LIGHT} /></I>
          <Coord label="X:" value="502,386mn" className="ml-[7px]" />
          <Coord label="Y:" value="-852,344m" className="ml-[3px]" />
          <Coord label="Z:" value="139,492mn" className="ml-[3px]" />
          <span className="ml-[2px] text-[11px] text-[#e6e6e6] whitespace-nowrap">Grid = 254,0mm</span>
        </div>
        <div className="flex items-center ml-[309px] mt-[4px]">
          <div className="w-[21px] h-[21px] bg-[#5b87bd] rounded-[3px] flex items-center justify-center">
            <I w={14} h={14}><path d="M7 1l5 3v6l-5 3-5-3V4zM2 4l5 3 5-3M7 7v6" stroke="#ddd" /></I>
          </div>
          <span className="ml-[6px] text-[11px] text-[#e6e6e6] whitespace-nowrap">Add Time Tag</span>
        </div>
      </div>
      <div className="w-[42px] h-[43px] mt-[4px] bg-[#5a5a5a] rounded-[3px] shrink-0 flex items-center justify-center">
        <I w={34} h={34}>
          <path d="M11 3h9v8h9v9h-9v9h-9v-9H3v-9h8z" fill="#e0e0e0" />
          <circle cx="27" cy="20" r="4" stroke={TEAL} strokeWidth="2" />
          <path d="M24 23l-7 8M19 29l2 2" stroke={TEAL} strokeWidth="2" />
        </I>
      </div>
      <div className="w-[170px] shrink-0 ml-[5px] flex flex-col text-[11px]">
        <div className="flex mt-[6px]">
          <div className="w-[45px] h-[19px] bg-[#5a5a5a] rounded-[2px] text-center leading-[18px] text-[#cfcfcf] whitespace-nowrap tracking-[-0.5px] overflow-hidden">Auto Key</div>
          <Drop label="Selected" className="ml-[6px] w-[114px] !h-[19px]" />
        </div>
        <div className="flex mt-[3px] items-center">
          <div className="w-[45px] h-[19px] bg-[#5a5a5a] rounded-[2px] text-center leading-[18px] text-[#cfcfcf] whitespace-nowrap">Set Key</div>
          <I w={20} h={20} className="ml-[6px]"><path d="M6 2h8M7 2c0 6-2 9-4 16M13 2c0 6 2 9 4 16" stroke={TEAL} strokeWidth="1.5" /><path d="M8 6h4" stroke={LIGHT} strokeWidth="2" /></I>
          <div className="ml-[5px] w-[89px] h-[20px] bg-[#5a5a5a] rounded-[2px] text-center leading-[19px] text-[#cfcfcf]">Key Filters...</div>
        </div>
      </div>
      <PlayBack />
    </div>
  );
}

function Taskbar() {
  return (
    <div className="h-[40px] bg-linear-to-r from-[#05688f] via-[#05598a] to-[#022d6f] flex items-center text-white">
      <FaWindows size={24} className="ml-[12px] shrink-0" />
      <Search size={19} strokeWidth={1.5} className="ml-[27px] -scale-x-100 shrink-0" />
      <I w={18} h={18} className="ml-[29px]">
        <path d="M3 1h9M3 17h9M2 5h11v8H2zM16 5h2v3h-2z" stroke="#fff" fill="none" />
        <rect x="15" y="10" width="3" height="3" fill="#fff" />
      </I>
      <I w={30} h={28} className="ml-[33px]">
        <path d="M1 2h11l3 3h14v20H1z" fill="#f5c543" />
        <path d="M1 2h11l3 3H1z" fill="#d9a520" />
        <rect x="9" y="15" width="12" height="10" fill="#3a8ed8" />
        <rect x="13" y="20" width="4" height="5" fill="#f5c543" />
      </I>
      <FaEdge size={27} color="#0f7fd6" className="ml-[32px] shrink-0" />
      <div className="ml-[19px] w-[58px] h-[40px] bg-[#3a84a8] border border-[#6aa6c2] flex items-center justify-center shrink-0">
        <I w={30} h={30}>
          <circle cx="15" cy="15" r="15" fill="#f4f4f4" />
          <path d="M8 7l7 10 7-10M15 17v9" stroke="#d8231f" strokeWidth="3.500" />
        </I>
      </div>
      <div className="ml-[16px] w-[30px] h-[25px] bg-black border border-[#999] shrink-0 text-[9px] tracking-normal leading-[12px] pl-[3px] pt-[3px] font-['Liberation_Mono',monospace]">C:\_</div>
      <I w={30} h={28} className="ml-[20px]">
        <rect x="1" y="1" width="22" height="24" fill="#b6c8e2" stroke="#3a5fa0" />
        <path d="M1 8h22M1 15h22M12 1v24" stroke="#3a5fa0" />
        <circle cx="20" cy="19" r="8.500" fill="#18a818" stroke="#fff" />
        <path d="M17 14l8 5-8 5z" fill="#fff" />
      </I>
      <div className="ml-[29px] w-[58px] h-[40px] bg-[#6aa4bd] border border-[#bcd7e2] flex items-center justify-center shrink-0">
        <div className="w-[32px] h-[32px] bg-linear-to-b from-[#d8ecec] to-[#a8d0d0] flex flex-col items-center">
          <span className="text-[22px] leading-[26px] font-black text-[#1b9a9c] font-['Lato',sans-serif]">3</span>
          <span className="text-[5px] leading-[6px] font-bold text-[#1b6a6c] self-end mr-[3px]">MAX</span>
        </div>
      </div>
      <span className="ml-[545px] w-0 h-0 border-x-[4px] border-x-transparent border-b-[5px] border-b-white shrink-0" />
      <I w={16} h={22} className="ml-[20px]"><path d="M2 8h4l6-6v18l-6-6H2z" fill="#e06a3a" stroke="#7a2a10" /></I>
      <I w={20} h={18} className="ml-[16px]"><path d="M2 2v4M6 2v4M1 6h6v4H1zM4 10v6h15V6H9" stroke="#fff" strokeWidth="1" /><path d="M11 9l4 4M15 9l-4 4" stroke="#fff" /></I>
      <I w={18} h={18} className="ml-[12px]"><path d="M2 17C2 9 8 3 16 2M6 17c0-5 4-9 10-10M10 17c0-3 2-5 6-6" stroke="#fff" strokeDasharray="2 1" strokeWidth="1.2" /><circle cx="14" cy="15" r="2" fill="#fff" /></I>
      <I w={18} h={18} className="ml-[12px]"><path d="M2 7h3l4-4v12l-4-4H2zM12 6c1 2 1 4 0 6M15 3c2 4 2 8 0 12" stroke="#fff" /></I>
      <span className="ml-[10px] text-[12px]">РУС</span>
      <div className="ml-[14px] w-[62px] flex flex-col items-center text-[11px] leading-[19px] shrink-0">
        <span>14:03</span>
        <span>25.09.2019</span>
      </div>
      <div className="ml-[16px] relative w-[20px] h-[22px] shrink-0">
        <I w={16} h={16}><path d="M0 1h15v11H6l-3 3v-3H0z" fill="#fff" /><path d="M3 4h9M3 7h9" stroke="#05355f" /></I>
        <div className="absolute left-[6px] top-[5px] w-[17px] h-[17px] rounded-full bg-[#1f6fb4] border border-[#0c3f78] text-[11px] leading-[15px] text-center">3</div>
      </div>
    </div>
  );
}

export default function App() {
  return (
    <div className="w-[1366px] h-[768px] overflow-hidden bg-[#444] flex flex-col font-['Open_Sans',sans-serif] tracking-[-0.3px]">
      <div className="h-[45px] flex shrink-0">
        <div className="w-[41px] shrink-0 flex flex-col bg-[#4c4c4c]">
          <Logo />
        </div>
        <div className="w-[1325px] flex flex-col">
          <TitleRow />
          <BigMenu />
        </div>
      </div>
      <MainToolbar />
      <Ribbon />
      <div className="h-[551px] flex shrink-0">
        <div className="w-[40px] bg-[#353535] flex flex-col items-center shrink-0 relative">
          <div className="mt-[476px] w-[19px] h-[20px] bg-[#555] rounded-[3px] flex items-center justify-center -ml-[1px]">
            <span className="w-0 h-0 border-y-[5px] border-y-transparent border-l-[6px] border-l-[#ddd]" />
          </div>
          <div className="mt-[10px] ml-[4px] w-[36px] h-[44px] bg-[#3f78c4] rounded-l-[4px] flex items-center justify-center">
            <div className="w-[30px] h-[28px] bg-[#5c6673] border border-[#222] rounded-[2px]" />
          </div>
        </div>
        <div className="w-[946px] flex flex-col shrink-0">
          <Viewport />
          <TimeSlider />
          <Track />
        </div>
        <CommandPanel />
      </div>
      <StatusBar />
      <Taskbar />
    </div>
  );
}
